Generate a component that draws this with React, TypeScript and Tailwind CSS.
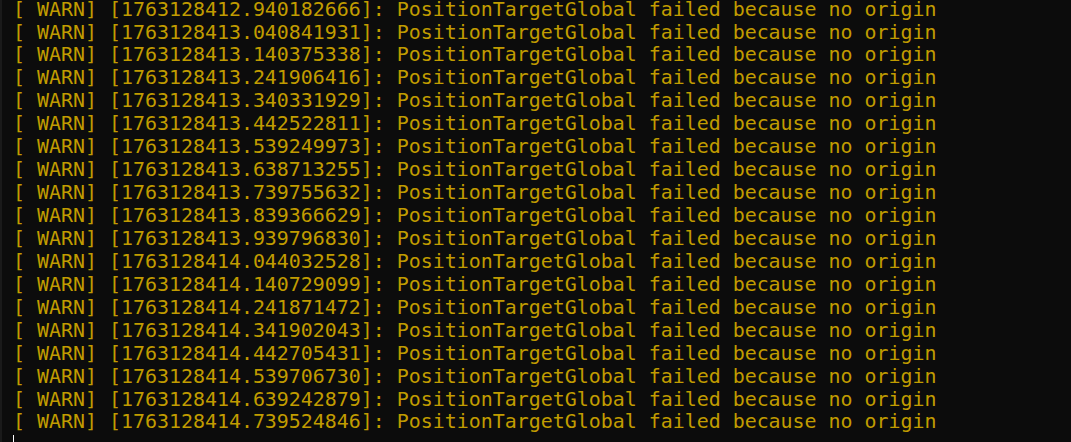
const stamps = [
  "1763128412.940182666",
  "1763128413.040841931",
  "1763128413.140375338",
  "1763128413.241906416",
  "1763128413.340331929",
  "1763128413.442522811",
  "1763128413.539249973",
  "1763128413.638713255",
  "1763128413.739755632",
  "1763128413.839366629",
  "1763128413.939796830",
  "1763128414.044032528",
  "1763128414.140729099",
  "1763128414.241871472",
  "1763128414.341902043",
  "1763128414.442705431",
  "1763128414.539706730",
  "1763128414.639242879",
  "1763128414.739524846",
];

export default function App() {
  return (
    <div className="h-[442px] w-[1071px] overflow-hidden bg-[#0c0c0c] border-l-2 border-[#1a1a1a]">
      <div className="-mt-[1.4px] pl-[11px] font-['DejaVu_Sans_Mono','Liberation_Mono',monospace] text-[19.93px] leading-[22.94px] text-[#c19c00] whitespace-pre">
        {stamps.map((s) => (
          <div key={s}>{`[ WARN] [${s}]: PositionTargetGlobal failed because no origin`}</div>
        ))}
        <div className="h-[22.94px] pt-[1px]">
          <div className="h-[20px] w-px bg-white" />
        </div>
      </div>
    </div>
  );
}
